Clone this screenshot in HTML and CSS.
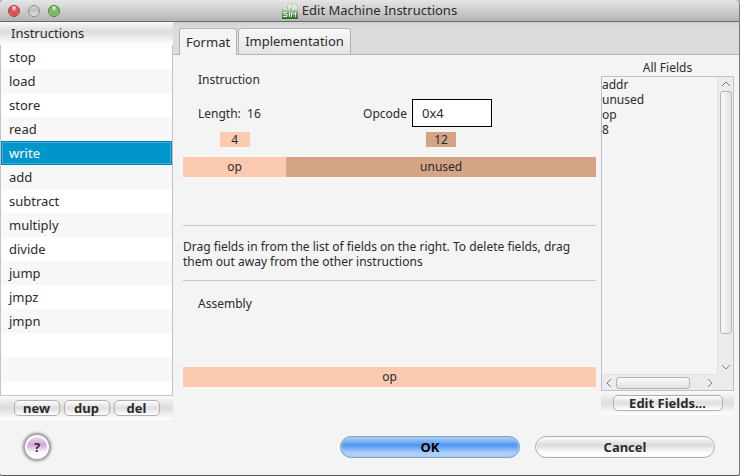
FILE: index.html
```html
<!DOCTYPE html>
<html lang="en">
<head>
<meta charset="utf-8">
<title>Edit Machine Instructions</title>
<link rel="stylesheet" href="styles.css">
</head>
<body>
<div class="window">
  <header class="titlebar">
    <div class="lights">
      <button class="light red" aria-label="Close"></button>
      <button class="light gray" aria-label="Minimize"></button>
      <button class="light green" aria-label="Zoom"></button>
    </div>
    <h1 class="title">
      <svg class="app-icon" viewBox="0 0 16 16" aria-hidden="true">
        <defs><linearGradient id="g" x1="0" y1="0" x2="0" y2="1"><stop offset="0" stop-color="#d3dcd2"/><stop offset=".5" stop-color="#a9bda6"/><stop offset=".7" stop-color="#5f9658"/><stop offset="1" stop-color="#2c6428"/></linearGradient></defs>
        <rect width="16" height="16" fill="url(#g)"/>
        <path d="M5 2H2v4h3M7 2v5M7 2h2v2H7M11 7V3l1-1 2 1v4M11 5h3" fill="none" stroke="#f4f8f3"/>
        <path d="M5 9.500H2v2h3v2H1M7.500 9v5M9.500 14V9.500l2 2 2-2V14" fill="none" stroke="#dcebd9"/>
      </svg>
      <span>Edit Machine Instructions</span>
    </h1>
  </header>
  <div class="body">
    <aside class="sidebar">
      <h2 class="list-head">Instructions</h2>
      <ul class="list" role="listbox" aria-label="Instructions">
        <li role="option">stop</li>
        <li role="option">load</li>
        <li role="option">store</li>
        <li role="option">read</li>
        <li role="option" class="selected" aria-selected="true">write</li>
        <li role="option">add</li>
        <li role="option">subtract</li>
        <li role="option">multiply</li>
        <li role="option">divide</li>
        <li role="option">jump</li>
        <li role="option">jmpz</li>
        <li role="option">jmpn</li>
      </ul>
      <div class="strip">
        <button class="small">new</button>
        <button class="small">dup</button>
        <button class="small">del</button>
      </div>
    </aside>
    <main class="main">
      <div class="tabs" role="tablist">
        <button class="tab active" role="tab" aria-selected="true">Format</button>
        <button class="tab" role="tab">Implementation</button>
      </div>
      <div class="panel">
        <section class="editor">
          <h3 class="label">Instruction</h3>
          <div class="props">
            <span>Length:&nbsp; 16</span>
            <label class="opcode">Opcode <input class="box" value="0x4"></label>
          </div>
          <div class="sizes">
            <span class="size peach">4</span>
            <span class="size tan">12</span>
          </div>
          <div class="fields">
            <div class="peach">op</div>
            <div class="tan">unused</div>
          </div>
          <p class="note">Drag fields in from the list of fields on the right. To delete fields, drag them out away from the other instructions</p>
          <h3 class="label assembly">Assembly</h3>
          <div class="asm peach">op</div>
        </section>
        <section class="all">
          <h3 class="all-title">All Fields</h3>
          <div class="scroll">
            <ul class="names">
              <li>addr</li>
              <li>unused</li>
              <li>op</li>
              <li>8</li>
            </ul>
            <div class="vbar">
              <svg class="arrow" viewBox="0 0 12 12"><path d="M2 8l4-4 4 4"/></svg>
              <div class="thumb"></div>
              <svg class="arrow" viewBox="0 0 12 12"><path d="M2 4l4 4 4-4"/></svg>
            </div>
            <div class="hbar">
              <svg class="arrow" viewBox="0 0 12 12"><path d="M8 2L4 6l4 4"/></svg>
              <div class="thumb"></div>
              <svg class="arrow" viewBox="0 0 12 12"><path d="M4 2l4 4-4 4"/></svg>
            </div>
            <div class="corner"></div>
          </div>
          <div class="strip">
            <button class="small wide">Edit Fields...</button>
          </div>
        </section>
      </div>
    </main>
  </div>
  <footer class="footer">
    <button class="help" aria-label="Help">?</button>
    <div class="actions">
      <button class="big primary">OK</button>
      <button class="big">Cancel</button>
    </div>
  </footer>
</div>
</body>
</html>
```
FILE: styles.css
```css
* { box-sizing: border-box; }
body { margin: 0; background: #b9aeb4; font: 12px/15px "Noto Sans", sans-serif; color: #2b2b2b; }
h1, h2, h3, p, ul { margin: 0; padding: 0; font: inherit; list-style: none; }
button, input { font: inherit; color: inherit; margin: 0; }
.window { display: flex; flex-direction: column; min-height: 100vh; background: #f4f4f4; border-right: 1px solid #777; border-bottom: 1px solid #555; border-radius: 5px 5px 3px 3px; overflow: hidden; }
.titlebar { display: grid; grid-template-columns: 1fr auto 1fr; align-items: center; height: 22px; padding: 0 8px; background: linear-gradient(#e6e6e6, #b4b4b4); border-bottom: 1px solid #686868; }
.lights { display: flex; gap: 8px; }
.light { width: 12px; height: 12px; padding: 0; border: 1px solid; border-radius: 50%; }
.red { border-color: #96423f; background: radial-gradient(ellipse at 50% 15%, #fff 0, #e6585a 35%, #e8474a 60%, #ffa5a0 100%); }
.gray { border-color: #8e8e8e; background: linear-gradient(#d8d8d8, #bdbdbd 40%, #e6e6e6); }
.green { border-color: #4c7c3e; background: radial-gradient(ellipse at 50% 15%, #fff 0, #7cb967 35%, #77b95f 60%, #cdf5b4 100%); }
.title { display: flex; align-items: center; gap: 4px; font-size: 13px; }
.app-icon { width: 16px; height: 16px; }
.body { flex: 1; display: flex; }
.sidebar { flex: none; width: 173px; display: flex; flex-direction: column; }
.list-head { padding: 4px 11px; font-size: 13px; background: linear-gradient(#fafafa, #dcdcdc 40%, #fff); }
.list { flex: 1; border: 1px solid #c4c4c4; border-top: 0; font-size: 13px; line-height: 24px; background: repeating-linear-gradient(#fff 0 24px, #f8f8f8 24px 48px); }
.list li { padding: 0 8px; height: 24px; }
.list .selected { background: #0096cc; color: #fff; border: 1px solid #0083b8; box-shadow: inset 0 0 0 1px #3cb0dc; padding: 0 7px; line-height: 22px; }
.strip { display: flex; justify-content: center; gap: 4px; padding: 4px 0; height: 24px; background: linear-gradient(#fafafa, #dcdcdc 50%, #fff); }
.small { width: 46px; height: 16px; padding: 0; border: 1px solid #b0b0b0; border-radius: 5px; background: linear-gradient(#fff, #dedede 50%, #fff); font-weight: bold; font-size: 13px; line-height: 14px; }
.wide { width: 110px; }
.main { flex: 1; display: flex; flex-direction: column; min-width: 0; }
.tabs { display: flex; gap: 1px; height: 33px; padding: 6px 6px 0; background: linear-gradient(#d0d0d0, #dcdcdc 6px); border-bottom: 1px solid #b4b4b4; }
.tab { height: 26px; padding: 0 6px; border: 1px solid #b4b4b4; border-bottom: 0; border-radius: 3px 3px 0 0; background: linear-gradient(#f8f8f8, #e4e4e4); font-size: 13px; }
.active { height: 27px; background: #f4f4f4; }
.panel { flex: 1; display: flex; gap: 5px; padding: 0 5px 5px 10px; }
.editor { flex: 1; min-width: 0; }
.label { margin: 17px 15px 0; }
.props { display: flex; align-items: center; padding-left: 15px; margin-top: 12px; }
.props > * { flex: 1; }
.opcode { display: flex; align-items: center; justify-content: flex-end; gap: 5px; margin-right: 104px; }
.box { width: 80px; height: 28px; padding: 0 9px; border: 1px solid #000; background: #fff; font-size: 13px; }
.sizes, .fields { display: grid; grid-template-columns: 4fr 12fr; text-align: center; }
.sizes { margin-top: 5px; justify-items: center; }
.size { width: 30px; }
.fields { margin-top: 10px; line-height: 20px; }
.peach { background: #fccab1; }
.tan { background: #d5a386; }
.note { margin-top: 48px; padding: 13px 0 11px; border: solid #c8c8c8; border-width: 1px 0; }
.assembly { margin-top: 15px; }
.asm { margin-top: 56px; text-align: center; line-height: 20px; }
.all { flex: none; width: 133px; display: flex; flex-direction: column; }
.all-title { padding: 5px 0 1px; text-align: center; }
.scroll { flex: 1; display: grid; grid-template: 1fr 16px / 1fr 16px; border: 1px solid #c0c0c0; }
.vbar, .hbar, .corner { background: #ebebeb; }
.vbar, .hbar { display: flex; align-items: center; }
.vbar { flex-direction: column; border-left: 1px solid #e0e0e0; }
.hbar { border-top: 1px solid #e0e0e0; }
.arrow { flex: none; width: 12px; height: 12px; margin: 1px; fill: none; stroke: #808080; }
.thumb { border: 1px solid #b4b4b4; border-radius: 3px; }
.vbar .thumb { flex: 1; width: 12px; margin-bottom: 26px; background: linear-gradient(90deg, #fafafa, #e2e2e2); }
.hbar .thumb { width: 74px; height: 12px; margin-right: auto; background: linear-gradient(#fafafa, #e2e2e2); }
.footer { display: flex; align-items: center; justify-content: space-between; padding: 13px 24px 14px 23px; }
.help { width: 28px; height: 28px; padding: 0; border: 2px solid #aaa; border-radius: 50%; background: linear-gradient(#f6e8f6, #d6a4d8 40%, #fff 75%); box-shadow: inset 0 0 0 2px #fff, 0 0 3px #888; font-weight: bold; font-size: 13px; }
.actions { display: flex; gap: 15px; }
.big { width: 180px; height: 22px; padding: 0; border: 1px solid #b0b0b0; border-radius: 11px; background: linear-gradient(#fff, #dadada 40%, #fff 80%); box-shadow: inset 0 0 0 1px #f4f4f4; font-weight: bold; font-size: 13px; }
.primary { border-color: #7ba3bb; color: #000; background: linear-gradient(#b6d2f8, #5096ee 40%, #acd0fa 80%); box-shadow: inset 0 0 0 1px #a4cdf4; }
```
